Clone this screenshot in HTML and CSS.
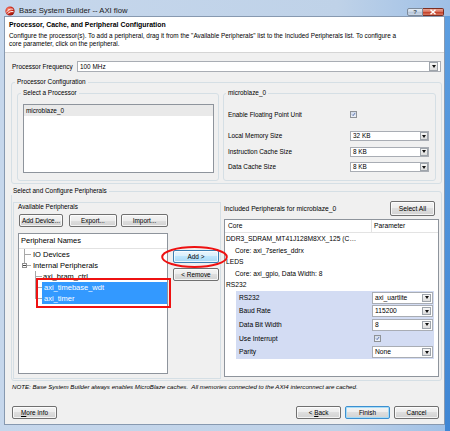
FILE: index.html
```html
<!DOCTYPE html>
<html lang="en">
<head>
<meta charset="utf-8">
<title>Base System Builder -- AXI flow</title>
<link rel="stylesheet" href="styles.css">
</head>
<body>
<div class="window">
  <div class="titlebar">
    <svg class="app-icon" viewBox="0 0 10 10" width="10" height="10">
      <defs>
        <radialGradient id="rb" cx="35%" cy="35%" r="70%">
          <stop offset="0" stop-color="#ff9a80"/>
          <stop offset="0.55" stop-color="#d42a1a"/>
          <stop offset="1" stop-color="#8c1208"/>
        </radialGradient>
      </defs>
      <circle cx="5" cy="5" r="4.6" fill="url(#rb)"/>
      <path d="M1.6 6.4 C3.2 3.2 5.8 2.6 8.2 3.4 M2.4 8 C4.4 5.6 6.4 5.2 8.6 5.8" stroke="#fff" stroke-width="1" fill="none"/>
    </svg>
    <span class="title">Base System Builder -- AXI flow</span>
    <div class="caption">
      <div class="cap help">?</div>
      <div class="cap close">
        <svg viewBox="0 0 8 6" width="8" height="6"><path d="M1.5 0.8 L6.5 5.2 M6.5 0.8 L1.5 5.2" stroke="#fff" stroke-width="1.4"/></svg>
      </div>
    </div>
  </div>

  <div class="client">
    <div class="header">
      <div class="h-title">Processor, Cache, and Peripheral Configuration</div>
      <div class="h-desc">Configure the processor(s). To add a peripheral, drag it from the "Available Peripherals" list to the Included Peripherals list. To configure a<br>core parameter, click on the peripheral.</div>
    </div>

    <div class="body">
      <div class="freq-row">
        <span class="freq-lbl">Processor Frequency</span>
        <div class="combo wide"><span class="val">100 MHz</span><i class="arrow"></i></div>
      </div>

      <fieldset class="group g-proc">
        <legend>Processor Configuration</legend>
        <div class="proc-cols">
          <fieldset class="group g-select">
            <legend>Select a Processor</legend>
            <div class="listbox"><div class="li sel">microblaze_0</div></div>
          </fieldset>
          <fieldset class="group g-mb">
            <legend>microblaze_0</legend>
            <div class="mb-row fpu"><span class="mb-lbl">Enable Floating Point Unit</span><span class="chk"><svg viewBox="0 0 7 7" width="7" height="7"><path d="M1.6 3.6 L3 5 L5.6 1.6" stroke="#1d3f8f" stroke-width="1" fill="none"/></svg></span></div>
            <div class="mb-combos">
              <div class="mb-row"><span class="mb-lbl">Local Memory Size</span><div class="combo sm"><span class="val">32 KB</span><i class="arrow"></i></div></div>
              <div class="mb-row"><span class="mb-lbl">Instruction Cache Size</span><div class="combo sm"><span class="val">8 KB</span><i class="arrow"></i></div></div>
              <div class="mb-row"><span class="mb-lbl">Data Cache Size</span><div class="combo sm"><span class="val">8 KB</span><i class="arrow"></i></div></div>
            </div>
          </fieldset>
        </div>
      </fieldset>

      <fieldset class="group g-periph">
        <legend>Select and Configure Peripherals</legend>
        <div class="periph-cols">
          <div class="panel avail">
            <div class="panel-title">Available Peripherals</div>
            <div class="btn-row">
              <div class="btn b-add-dev">Add Device...</div>
              <div class="btn b-export">Export...</div>
              <div class="btn b-import">Import...</div>
            </div>
            <div class="avail-main">
              <div class="tree">
                <div class="tree-head">Peripheral Names</div>
                <div class="tree-body">
                  <div class="node"><span class="g1 mid"></span><span class="txt">IO Devices</span></div>
                  <div class="node"><span class="g1 last"><span class="expander"></span></span><span class="txt">Internal Peripherals</span></div>
                  <div class="node"><span class="g1"></span><span class="g2 mid"></span><span class="txt">axi_bram_ctrl</span></div>
                  <div class="node"><span class="g1"></span><span class="g2 mid"></span><span class="txt sel">axi_timebase_wdt</span></div>
                  <div class="node"><span class="g1"></span><span class="g2 last"></span><span class="txt sel">axi_timer</span></div>
                </div>
              </div>
              <div class="mid-btns">
                <div class="btn hot b-mid"><span>Add &gt;</span></div>
                <div class="btn b-mid"><span>&lt; Remove</span></div>
              </div>
            </div>
          </div>

          <div class="panel incl">
            <div class="incl-head">
              <span>Included Peripherals for microblaze_0</span>
              <div class="btn b-selall">Select All</div>
            </div>
            <div class="ptable">
              <div class="pt-head"><div class="c-core">Core</div><div class="c-param">Parameter</div></div>
              <div class="pt-row">DDR3_SDRAM_MT41J128M8XX_125 (C…</div>
              <div class="pt-row sub">Core: axi_7series_ddrx</div>
              <div class="pt-row">LEDS</div>
              <div class="pt-row sub">Core: axi_gpio, Data Width: 8</div>
              <div class="pt-row">RS232</div>
              <div class="props">
                <div class="prop"><span class="pn">RS232</span><div class="combo pc"><span class="val">axi_uartlite</span><i class="arrow"></i></div></div>
                <div class="prop"><span class="pn">Baud Rate</span><div class="combo pc"><span class="val">115200</span><i class="arrow"></i></div></div>
                <div class="prop"><span class="pn">Data Bit Width</span><div class="combo pc"><span class="val">8</span><i class="arrow"></i></div></div>
                <div class="prop"><span class="pn">Use Interrupt</span><span class="chk pchk"><svg viewBox="0 0 7 7" width="7" height="7"><path d="M1.6 3.6 L3 5 L5.6 1.6" stroke="#1d3f8f" stroke-width="1" fill="none"/></svg></span></div>
                <div class="prop"><span class="pn">Parity</span><div class="combo pc"><span class="val">None</span><i class="arrow"></i></div></div>
              </div>
            </div>
          </div>
        </div>
      </fieldset>

      <div class="note">NOTE: Base System Builder always enables MicroBlaze caches.&nbsp; All memories connected to the AXI4 interconnect are cached.</div>
    </div>

    <div class="footer">
      <div class="btn fbtn"><span><u>M</u>ore Info</span></div>
      <div class="spacer"></div>
      <div class="btn fbtn"><span>&lt; <u>B</u>ack</span></div>
      <div class="btn fbtn def"><span>Finish</span></div>
      <div class="btn fbtn"><span>Cancel</span></div>
    </div>
  </div>

  <div class="anno-rect"></div>
  <svg class="anno-ellipse" viewBox="0 0 67 22" width="67" height="22"><ellipse cx="33.5" cy="11" rx="32.3" ry="9.9" fill="none" stroke="#ee1111" stroke-width="2"/></svg>
</div>
</body>
</html>
```

FILE: styles.css
```css
* { box-sizing: border-box; margin: 0; padding: 0; }
html, body { width: 450px; height: 431px; overflow: hidden; }
body {
  font-family: "Liberation Sans", Arial, sans-serif;
  font-size: 6.4px;
  line-height: 8px;
  color: #000;
  background: #fff;
}

.window {
  position: relative;
  width: 450px;
  height: 431px;
  display: flex;
  flex-direction: column;
  padding: 0 5px 6px 4px;
  background:
    linear-gradient(180deg, #5d9ee0, #3f86d4) right 16px / 5px 415px no-repeat,
    linear-gradient(90deg, #c6d7ec 0%, #bfd2e8 75%, #9fc0e6 100%);
}

/* title bar */
.titlebar {
  height: 16px;
  display: flex;
  align-items: center;
  padding: 6px 0 0 1px;
}
.app-icon { display: block; }
.title { margin-left: 4px; font-size: 7.7px; color: #1a1a1a; }
.caption { margin-left: auto; margin-right: 1px; align-self: flex-start; margin-top: 2px; display: flex; }
.cap { height: 8px; display: flex; align-items: center; justify-content: center; }
.cap.help {
  width: 16px;
  border: 1px solid #7d8a9a;
  border-radius: 2px 0 0 2px;
  background: linear-gradient(#e6edf5, #c7d4e3 50%, #b4c4d8 50%, #cbd8e8);
  font-size: 6px;
  line-height: 6px;
  color: #3a4656;
  font-weight: bold;
}
.cap.close {
  width: 21px;
  border: 1px solid #7b2e22;
  border-left: none;
  border-radius: 0 2px 2px 0;
  background: linear-gradient(#eaa898, #d66c57 50%, #c23a22 50%, #d97a63);
}

/* client */
.client {
  flex: 1;
  display: flex;
  flex-direction: column;
  background: #f0f0f0;
  border: 1px solid #8799b0;
  min-height: 0;
}
.header {
  height: 36px;
  background: #fff;
  border-bottom: 1px solid #d5d5d5;
  padding: 4px 4px 0 4px;
}
.h-title { font-weight: bold; font-size: 6.9px; line-height: 8px; }
.h-desc { margin-top: 3px; line-height: 8px; white-space: nowrap; }

.body { flex: 1; padding: 0 2px 0 6px; min-height: 0; }

.freq-row { display: flex; align-items: center; height: 11px; margin: 8px 1px 0 1px; }
.freq-lbl { width: 65px; }

/* combo */
.combo {
  display: flex;
  align-items: stretch;
  background: #fff;
  border: 1px solid #a9adb4;
}
.combo .val { flex: 1; display: flex; align-items: center; padding-left: 2px; white-space: nowrap; overflow: hidden; }
.arrow {
  width: 9px;
  border: 1px solid #9ea4ab;
  background: linear-gradient(#f7f7f7, #dcdcdc);
  display: flex;
  align-items: center;
  justify-content: center;
}
.arrow::before {
  content: "";
  border-top: 3px solid #111;
  border-left: 2px solid transparent;
  border-right: 2px solid transparent;
}
.combo.wide { flex: 1; height: 11px; }
.combo.wide .arrow { margin: 0 2px 0 0; }
.combo.sm { width: 79px; height: 10px; }
.combo.sm .arrow { width: 8px; }
.combo.pc { width: 61px; height: 12px; }
.combo.pc .arrow { width: 9px; margin: 1px; }

/* groups */
fieldset.group {
  border: 1px solid #d5dfe5;
  border-radius: 3px;
  min-width: 0;
}
fieldset.group > legend { padding: 0 2px; margin-left: -2px; line-height: 8px; }

.g-proc { margin-top: 6px; padding: 3px 5px 2px 5px; }
.proc-cols { display: flex; gap: 4px; }
.g-select { width: 202px; padding: 7px 4px 7px 5px; }
.listbox { height: 69px; background: #fff; border: 1px solid #8e949c; }
.li { height: 11px; line-height: 11px; padding-left: 2px; }
.li.sel { background: #e9e9e9; }

.g-mb { flex: 1; padding: 12px 6px 7px 4px; }
.mb-row { display: flex; align-items: center; }
.fpu { height: 11px; }
.mb-lbl { width: 122px; }
.mb-combos { margin-top: 11px; display: flex; flex-direction: column; gap: 5.5px; }

.chk {
  width: 7px;
  height: 7px;
  border: 1px solid #8e9297;
  background: linear-gradient(#cfd9ea, #eef2f8);
  display: flex;
  align-items: center;
  justify-content: center;
}
.chk svg { display: block; width: 5px; height: 5px; }

/* peripherals */
.g-periph { margin-top: 3px; padding: 6px 2px 1px 1px; }
.g-periph > legend { margin-left: 2px; }
.periph-cols { display: flex; gap: 3px; height: 178px; }

.avail {
  width: 208px;
  margin-top: 1px;
  border: 1px solid #d5dfe5;
  padding: 0 1px 4px 4px;
  display: flex;
  flex-direction: column;
}
.panel-title { line-height: 7px; }
.btn-row { display: flex; margin-top: 4px; }

.btn {
  height: 13px;
  display: flex;
  align-items: center;
  justify-content: center;
  border: 1px solid #707070;
  border-radius: 2px;
  background: linear-gradient(#f4f4f4 0%, #ececec 50%, #dedede 50%, #d2d2d2 100%);
  box-shadow: inset 0 0 0 1px rgba(255, 255, 255, 0.75);
  white-space: nowrap;
  line-height: 8px;
}
.btn.hot {
  border-color: #3c7fb1;
  background: linear-gradient(#eaf6fd 0%, #d9f0fc 50%, #bee6fd 50%, #a7d9f5 100%);
}
.btn.def {
  border-color: #3c8fd0;
  box-shadow: inset 0 0 0 1px #a6dcf7;
}
.b-add-dev { width: 44px; margin-left: 1px; }
.b-export { width: 48px; margin-left: 6px; }
.b-import { width: 47px; margin-left: 4px; }

.avail-main { display: flex; margin-top: 6px; flex: 1; }
.tree { width: 150px; height: 141px; border: 1px solid #8e949c; background: #fff; font-size: 7.5px; }
.tree-head { height: 15px; line-height: 14px; padding-left: 2px; border-bottom: 1px solid #e2e2e2; }
.node { display: flex; height: 11px; line-height: 11px; }
.g1, .g2 { flex: none; height: 11px; }
.g1 { width: 13px; }
.g2 { width: 10px; }
.g1.mid {
  background:
    linear-gradient(#a8a8a8, #a8a8a8) 5px 0 / 1px 100% no-repeat,
    linear-gradient(#a8a8a8, #a8a8a8) 5px 5px / 7px 1px no-repeat;
}
.g1.last {
  display: flex;
  align-items: center;
  padding-left: 3px;
  background:
    linear-gradient(#a8a8a8, #a8a8a8) 5px 0 / 1px 3px no-repeat,
    linear-gradient(#a8a8a8, #a8a8a8) 8px 5px / 4px 1px no-repeat;
}
.expander {
  width: 5px;
  height: 5px;
  border: 1px solid #8f8f8f;
  background: linear-gradient(#444, #444) center / 3px 1px no-repeat, #fff;
}
.g2.mid {
  background:
    linear-gradient(#a8a8a8, #a8a8a8) 3px 0 / 1px 100% no-repeat,
    linear-gradient(#a8a8a8, #a8a8a8) 3px 5px / 7px 1px no-repeat;
}
.g2.last {
  background:
    linear-gradient(#a8a8a8, #a8a8a8) 3px 0 / 1px 6px no-repeat,
    linear-gradient(#a8a8a8, #a8a8a8) 3px 5px / 7px 1px no-repeat;
}
.txt { padding-left: 1px; white-space: nowrap; }
.txt.sel { flex: 1; background: #3399ff; color: #fff; padding-left: 2px; margin-right: 0; }

.mid-btns { margin-left: 5px; padding-top: 17px; display: flex; flex-direction: column; gap: 5px; }
.b-mid { width: 46px; }

.incl { flex: 1; display: flex; flex-direction: column; font-size: 6.7px; }
.incl-head {
  height: 15px;
  display: flex;
  align-items: center;
  justify-content: space-between;
  padding-right: 4px;
  margin-bottom: 3px;
}
.b-selall { width: 45px; height: 15px; }
.ptable { height: 158px; border: 1px solid #8e949c; background: #fff; }
.pt-head { display: flex; height: 13px; border-bottom: 1px solid #e3e3e3; line-height: 12px; }
.c-core { width: 147px; padding-left: 3px; border-right: 1px solid #e3e3e3; }
.c-param { padding-left: 2px; }
.pt-row { height: 11.6px; line-height: 11.6px; padding-left: 1px; white-space: nowrap; overflow: hidden; }
.pt-row.sub { padding-left: 10px; }
.props { margin: 0 4px 0 11px; background: #d3dcf3; }
.prop { display: flex; align-items: center; height: 13.6px; }
.pn { width: 136px; padding-left: 3px; }
.pchk { margin-left: 2px; }

.note { margin: 2px 0 0 1px; font-style: italic; font-size: 6.15px; line-height: 8px; white-space: nowrap; }

.footer { height: 27px; display: flex; align-items: flex-start; padding: 9px 5px 0 7px; }
.fbtn { width: 45px; }
.fbtn + .fbtn { margin-left: 4px; }
.spacer { flex: 1; }

/* annotations drawn over the screenshot */
.anno-rect {
  position: absolute;
  left: 36px;
  top: 278px;
  width: 135px;
  height: 30px;
  border: 2px solid #ee1111;
}
.anno-ellipse { position: absolute; left: 161px; top: 246px; }
```
